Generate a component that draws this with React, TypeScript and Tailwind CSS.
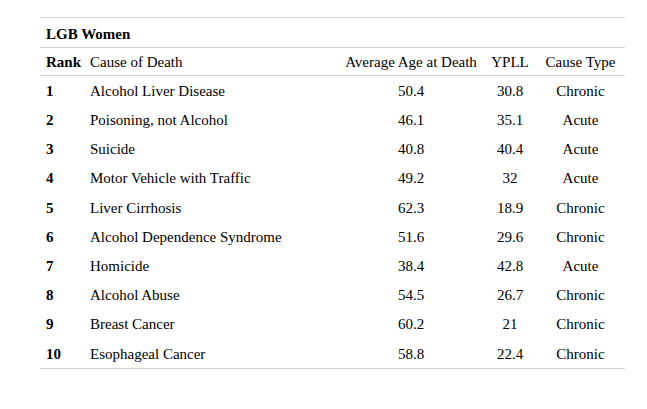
import React from 'react';

const rows = [
    { rank: 1, cause: 'Alcohol Liver Disease', age: '50.4', ypll: '30.8', type: 'Chronic' },
    { rank: 2, cause: 'Poisoning, not Alcohol', age: '46.1', ypll: '35.1', type: 'Acute' },
    { rank: 3, cause: 'Suicide', age: '40.8', ypll: '40.4', type: 'Acute' },
    { rank: 4, cause: 'Motor Vehicle with Traffic', age: '49.2', ypll: '32', type: 'Acute' },
    { rank: 5, cause: 'Liver Cirrhosis', age: '62.3', ypll: '18.9', type: 'Chronic' },
    { rank: 6, cause: 'Alcohol Dependence Syndrome', age: '51.6', ypll: '29.6', type: 'Chronic' },
    { rank: 7, cause: 'Homicide', age: '38.4', ypll: '42.8', type: 'Acute' },
    { rank: 8, cause: 'Alcohol Abuse', age: '54.5', ypll: '26.7', type: 'Chronic' },
    { rank: 9, cause: 'Breast Cancer', age: '60.2', ypll: '21', type: 'Chronic' },
    { rank: 10, cause: 'Esophageal Cancer', age: '58.8', ypll: '22.4', type: 'Chronic' },
];

const cols = 'grid grid-cols-[44px_254px_146px_52px_89px] items-center';

export default function App() {
    return (
        <div className="w-[647px] h-[409px] bg-white pt-[17px] px-[22px] font-['Liberation_Serif',serif] text-[15px] text-black">
            <div className="ml-[18px] w-[585px] border-t border-b border-[#d3d3d3]">
                {/* Title */}
                <div className="h-[30px] flex items-center px-[6px] pt-[4px] font-bold border-b border-[#d3d3d3]">
                    LGB Women
                </div>

                {/* Column headers */}
                <div className={`${cols} h-[28px] pt-[2px] border-b border-[#d3d3d3]`}>
                    <div className="px-[6px] font-bold">Rank</div>
                    <div className="px-[6px]">Cause of Death</div>
                    <div className="px-[6px] text-center whitespace-nowrap">Average Age at Death</div>
                    <div className="px-[6px] text-center">YPLL</div>
                    <div className="px-[6px] text-center whitespace-nowrap">Cause Type</div>
                </div>

                {/* Body */}
                {rows.map(r => (
                    <div key={r.rank} className={`${cols} h-[29.2px] pt-[1px]`}>
                        <div className="px-[6px] font-bold">{r.rank}</div>
                        <div className="px-[6px] whitespace-nowrap">{r.cause}</div>
                        <div className="px-[6px] text-center">{r.age}</div>
                        <div className="px-[6px] text-center">{r.ypll}</div>
                        <div className="px-[6px] text-center">{r.type}</div>
                    </div>
                ))}
            </div>
        </div>
    );
}
